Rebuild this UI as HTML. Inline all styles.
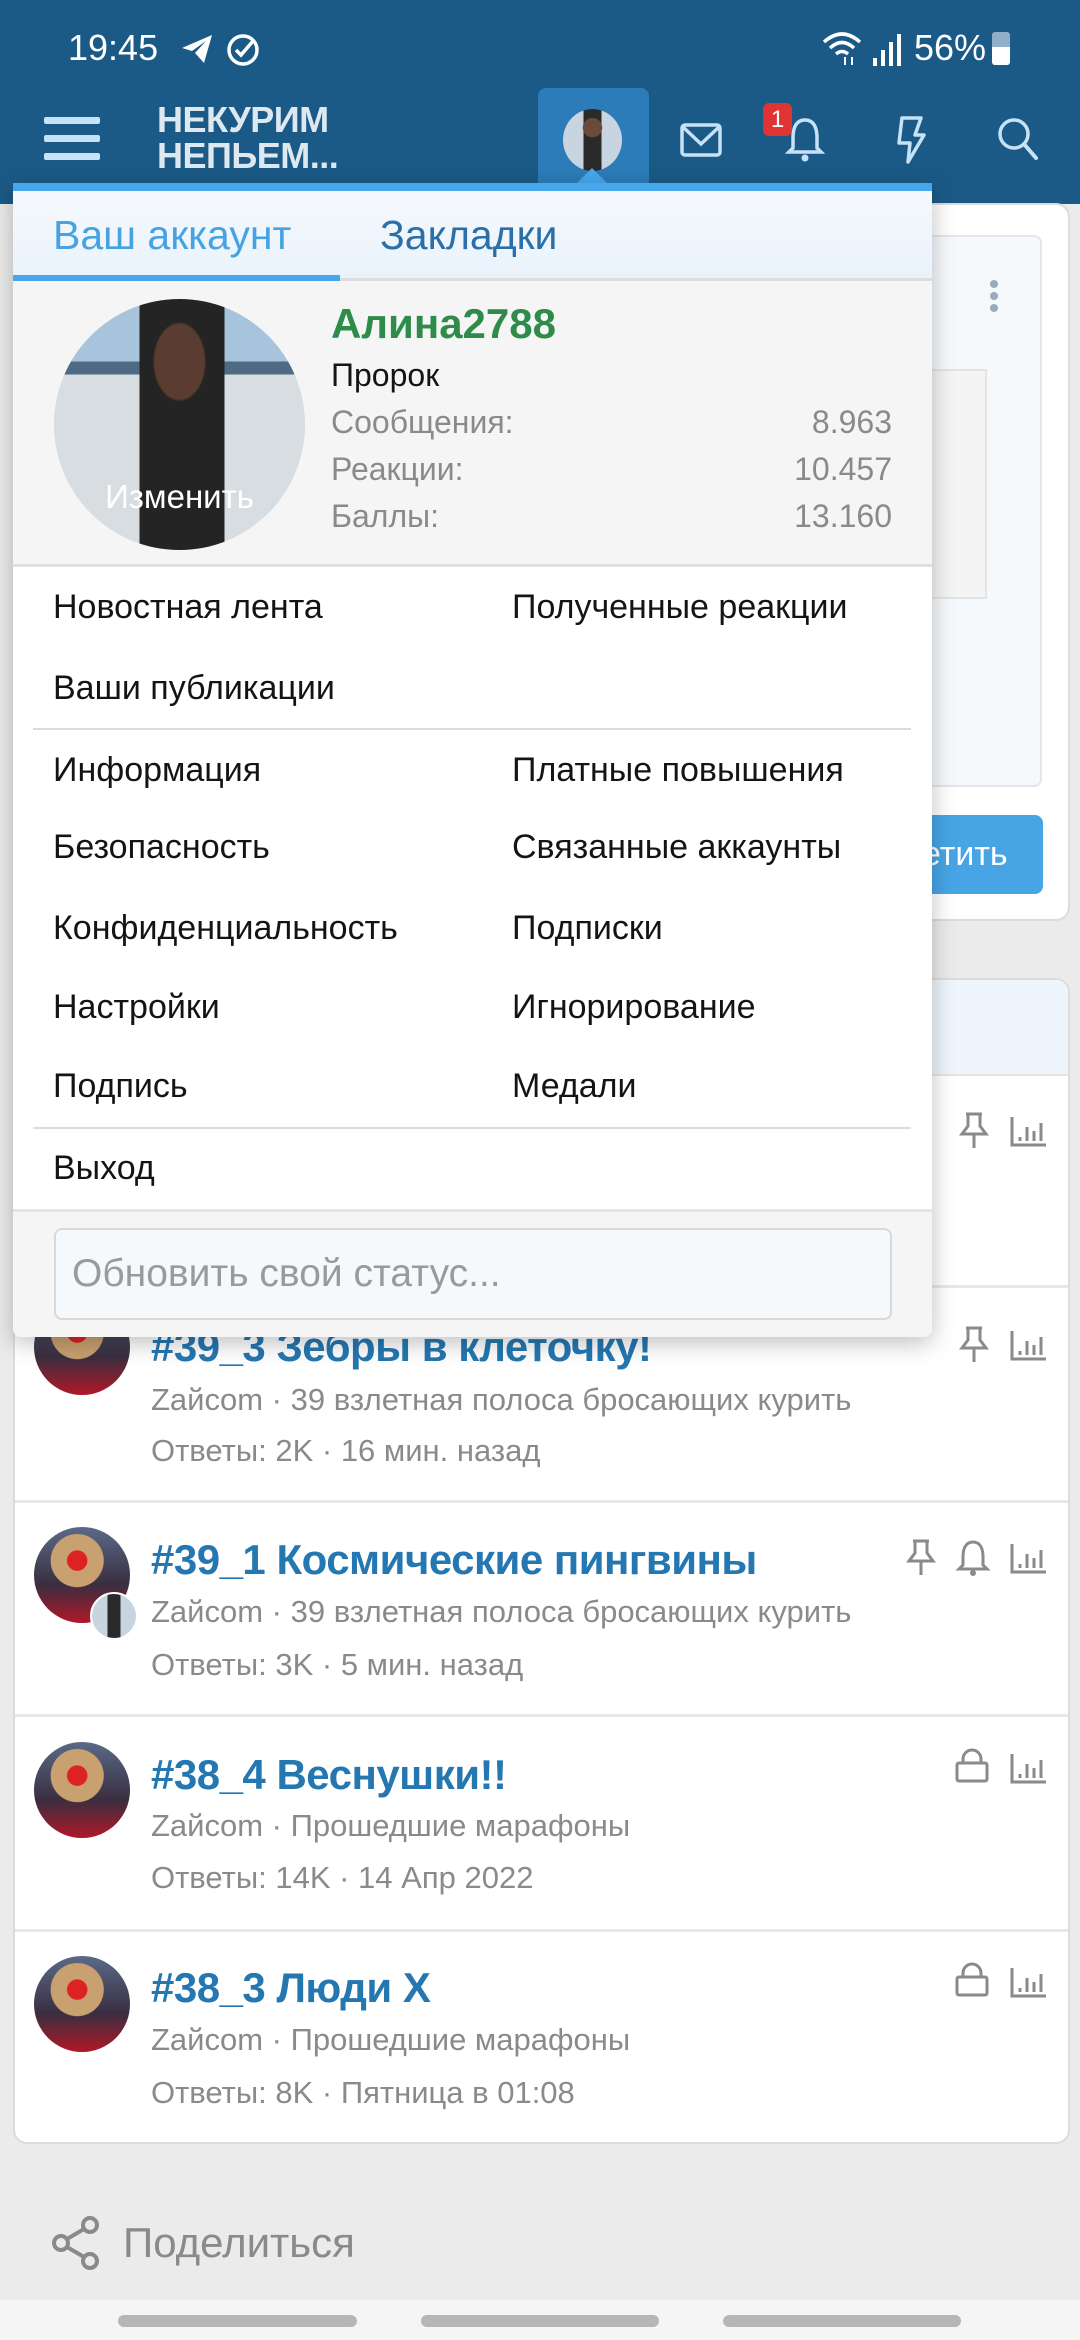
<!DOCTYPE html>
<html><head><meta charset="utf-8"><style>
*{margin:0;padding:0;box-sizing:border-box}
body{width:1080px;height:2340px;position:relative;overflow:hidden;background:#ebebeb;font-family:"Liberation Sans",sans-serif}
.a{position:absolute;white-space:nowrap}
.m{font-size:34px;color:#141414;line-height:40px}
.s{font-size:32px}
.g{color:#8a8a8a}
.t{font-size:42px;font-weight:bold;color:#2577b1;line-height:46px;letter-spacing:-0.5px}
.r{font-size:31px;color:#8a8a8a;line-height:40px}
svg{position:absolute;overflow:visible}
</style></head><body>
<div class="a" style="left:0;top:0;width:1080px;height:204px;background:#1b5a87"></div>
<div class="a" style="left:68px;top:28px;font-size:36px;color:#fff;line-height:40px">19:45</div>
<svg style="left:180px;top:33px" width="34" height="32" viewBox="0 0 34 32"><path d="M2 15 L32 2 L24 30 L15 20 L26 8 L12 18 Z" fill="#fff"/></svg>
<svg style="left:226px;top:33px" width="34" height="34" viewBox="0 0 34 34"><circle cx="17" cy="17" r="14" fill="none" stroke="#fff" stroke-width="3.5"/><path d="M10 17 L15 22 L27 8" fill="none" stroke="#fff" stroke-width="3.5"/></svg>
<svg style="left:822px;top:30px" width="40" height="36" viewBox="0 0 40 36"><path d="M2 12 Q20 -4 38 12 M8 18 Q20 7 32 18 M14 24 Q20 19 26 24" fill="none" stroke="#fff" stroke-width="3.5"/><path d="M23 27 v8 M30 35 v-8" stroke="#fff" stroke-width="2"/></svg>
<svg style="left:872px;top:34px" width="30" height="32" viewBox="0 0 30 32"><rect x="1" y="24" width="4" height="8" fill="#fff"/><rect x="9" y="16" width="4" height="16" fill="#fff"/><rect x="17" y="8" width="4" height="24" fill="#fff"/><rect x="25" y="0" width="4" height="32" fill="#fff"/></svg>
<div class="a" style="left:914px;top:28px;font-size:36px;color:#fff;line-height:40px">56%</div>
<div class="a" style="left:992px;top:32px;width:18px;height:33px;background:#8fb0c8;border-radius:3px"></div>
<div class="a" style="left:992px;top:47px;width:18px;height:18px;background:#fff;border-radius:0 0 3px 3px"></div>
<div class="a" style="left:44px;top:117px;width:56px;height:7px;background:#c5e2f7;border-radius:2px"></div>
<div class="a" style="left:44px;top:135px;width:56px;height:7px;background:#c5e2f7;border-radius:2px"></div>
<div class="a" style="left:44px;top:153px;width:56px;height:7px;background:#c5e2f7;border-radius:2px"></div>
<div class="a" style="left:157px;top:102px;font-size:36px;font-weight:bold;color:#dde8f0;line-height:36px;letter-spacing:-0.5px">НЕКУРИМ<br>НЕПЬЕМ...</div>
<div class="a" style="left:538px;top:88px;width:111px;height:100px;background:#2b7cb8;border-radius:8px 8px 0 0"></div>
<div class="a" style="left:563px;top:109px;width:59px;height:62px;border-radius:50%;background:radial-gradient(circle at 50% 30%,#6a4a3a 0 18%,transparent 19%),linear-gradient(90deg,#c8d4df 0 35%,#2a2a2a 35% 65%,#c8d4df 65%)"></div>
<svg style="left:572px;top:168px" width="40" height="20"><path d="M0 20 L20 0 L40 20Z" fill="#47a7eb"/></svg>
<svg style="left:680px;top:123px" width="42" height="34" viewBox="0 0 42 34"><rect x="2" y="2" width="38" height="30" rx="3" fill="none" stroke="#c5e2f7" stroke-width="3.5"/><path d="M3 4 L21 21 L39 4" fill="none" stroke="#c5e2f7" stroke-width="3.5"/></svg>
<svg style="left:786px;top:116px" width="38" height="46" viewBox="0 0 38 46"><path d="M19 4 C9 4 7 14 7 22 L7 32 L3 36 L35 36 L31 32 L31 22 C31 14 29 4 19 4Z" fill="none" stroke="#c5e2f7" stroke-width="3.5"/><circle cx="19" cy="42" r="3.5" fill="#c5e2f7"/></svg>
<div class="a" style="left:763px;top:103px;width:29px;height:33px;background:#e03434;border-radius:6px;color:#fff;font-size:24px;line-height:33px;text-align:center">1</div>
<svg style="left:893px;top:115px" width="34" height="50" viewBox="0 0 34 50"><path d="M9 3 L28 3 L22 20 L31 20 L15 47 L17 28 L6 28 Z" fill="none" stroke="#c5e2f7" stroke-width="3.5" stroke-linejoin="round"/></svg>
<svg style="left:996px;top:116px" width="44" height="46" viewBox="0 0 44 46"><circle cx="18" cy="18" r="14" fill="none" stroke="#c5e2f7" stroke-width="3.5"/><path d="M28 28 L40 42" stroke="#c5e2f7" stroke-width="4" stroke-linecap="round"/></svg>

<div class="a" style="left:900px;top:203px;width:170px;height:718px;background:#fff;border:2px solid #dcdcdc;border-radius:14px"></div>
<div class="a" style="left:900px;top:235px;width:142px;height:552px;background:#f6f9fc;border:2px solid #e0e6ec;border-radius:8px"></div>
<div class="a" style="left:900px;top:369px;width:87px;height:230px;background:#f4f4f4;border:2px solid #e4e4e4"></div>
<div class="a" style="left:990px;top:280px;width:8px;height:8px;border-radius:50%;background:#9aaab8;box-shadow:0 12px 0 #9aaab8,0 24px 0 #9aaab8"></div>
<div class="a" style="left:900px;top:815px;width:143px;height:79px;background:#47a5e6;border-radius:8px;color:#fff;font-size:34px;line-height:79px;padding-left:22px">етить</div>

<div class="a" style="left:13px;top:978px;width:1057px;height:1166px;background:#fff;border:2px solid #dcdcdc;border-radius:14px;overflow:hidden">
<div style="height:96px;background:#eef5fc;border-bottom:2px solid #e4e4e4"></div>
</div>
<div class="a" style="left:15px;top:1285px;width:1053px;height:3px;background:#e8e8e8"></div>
<div class="a" style="left:15px;top:1500px;width:1053px;height:3px;background:#e8e8e8"></div>
<div class="a" style="left:15px;top:1714px;width:1053px;height:3px;background:#e8e8e8"></div>
<div class="a" style="left:15px;top:1929px;width:1053px;height:3px;background:#e8e8e8"></div>

<div class="a" style="left:34px;top:1299px;width:96px;height:96px;border-radius:50%;background:radial-gradient(circle at 45% 35%,#d22 0 12%,#c9a070 13% 32%,transparent 33%),linear-gradient(180deg,#5a6a88,#3a2e40 60%,#b01828)"></div>
<div class="a t" style="left:151px;top:1324px">#39_3 Зебры в клеточку!</div>
<div class="a r" style="left:151px;top:1380px">Zайcom · 39 взлетная полоса бросающих курить</div>
<div class="a r" style="left:151px;top:1431px">Ответы: 2K · 16 мин. назад</div>

<div class="a" style="left:34px;top:1527px;width:96px;height:96px;border-radius:50%;background:radial-gradient(circle at 45% 35%,#d22 0 12%,#c9a070 13% 32%,transparent 33%),linear-gradient(180deg,#5a6a88,#3a2e40 60%,#b01828)"></div>
<div class="a" style="left:90px;top:1592px;width:48px;height:48px;border-radius:50%;border:2px solid #fff;background:linear-gradient(90deg,#c8d4df 0 35%,#2a2a2a 35% 65%,#c8d4df 65%)"></div>
<div class="a t" style="left:151px;top:1537px">#39_1 Космические пингвины</div>
<div class="a r" style="left:151px;top:1592px">Zайcom · 39 взлетная полоса бросающих курить</div>
<div class="a r" style="left:151px;top:1645px">Ответы: 3K · 5 мин. назад</div>

<div class="a" style="left:34px;top:1742px;width:96px;height:96px;border-radius:50%;background:radial-gradient(circle at 45% 35%,#d22 0 12%,#c9a070 13% 32%,transparent 33%),linear-gradient(180deg,#5a6a88,#3a2e40 60%,#b01828)"></div>
<div class="a t" style="left:151px;top:1752px">#38_4 Веснушки!!</div>
<div class="a r" style="left:151px;top:1806px">Zайcom · Прошедшие марафоны</div>
<div class="a r" style="left:151px;top:1858px">Ответы: 14K · 14 Апр 2022</div>

<div class="a" style="left:34px;top:1956px;width:96px;height:96px;border-radius:50%;background:radial-gradient(circle at 45% 35%,#d22 0 12%,#c9a070 13% 32%,transparent 33%),linear-gradient(180deg,#5a6a88,#3a2e40 60%,#b01828)"></div>
<div class="a t" style="left:151px;top:1965px">#38_3 Люди X</div>
<div class="a r" style="left:151px;top:2020px">Zайcom · Прошедшие марафоны</div>
<div class="a r" style="left:151px;top:2073px">Ответы: 8K · Пятница в 01:08</div>

<svg style="left:958px;top:1326px" width="32" height="38" viewBox="0 0 32 38"><path d="M8 2 H24 M10 2 V14 L4 22 H28 L22 14 V2 M16 22 V36" fill="none" stroke="#8a8a8a" stroke-width="3"/></svg>
<svg style="left:1010px;top:1329px" width="38" height="32" viewBox="0 0 38 32"><path d="M2 2 V30 H36 M10 22 V26 M17 12 V26 M24 16 V26 M31 8 V26" fill="none" stroke="#8a8a8a" stroke-width="3"/></svg>
<svg style="left:958px;top:1112px" width="32" height="38" viewBox="0 0 32 38"><path d="M8 2 H24 M10 2 V14 L4 22 H28 L22 14 V2 M16 22 V36" fill="none" stroke="#8a8a8a" stroke-width="3"/></svg>
<svg style="left:1010px;top:1115px" width="38" height="32" viewBox="0 0 38 32"><path d="M2 2 V30 H36 M10 22 V26 M17 12 V26 M24 16 V26 M31 8 V26" fill="none" stroke="#8a8a8a" stroke-width="3"/></svg>
<svg style="left:905px;top:1539px" width="32" height="38" viewBox="0 0 32 38"><path d="M8 2 H24 M10 2 V14 L4 22 H28 L22 14 V2 M16 22 V36" fill="none" stroke="#8a8a8a" stroke-width="3"/></svg>
<svg style="left:956px;top:1539px" width="34" height="38" viewBox="0 0 34 38"><path d="M17 3 C9 3 7 11 7 18 L7 26 L3 30 H31 L27 26 V18 C27 11 25 3 17 3Z" fill="none" stroke="#8a8a8a" stroke-width="3"/><circle cx="17" cy="34" r="3" fill="#8a8a8a"/></svg>
<svg style="left:1010px;top:1542px" width="38" height="32" viewBox="0 0 38 32"><path d="M2 2 V30 H36 M10 22 V26 M17 12 V26 M24 16 V26 M31 8 V26" fill="none" stroke="#8a8a8a" stroke-width="3"/></svg>
<svg style="left:955px;top:1749px" width="34" height="34" viewBox="0 0 34 34"><path d="M8 14 V10 A9 9 0 0 1 26 10 V14" fill="none" stroke="#8a8a8a" stroke-width="3"/><rect x="2" y="14" width="30" height="18" rx="2" fill="none" stroke="#8a8a8a" stroke-width="3"/></svg>
<svg style="left:1010px;top:1752px" width="38" height="32" viewBox="0 0 38 32"><path d="M2 2 V30 H36 M10 22 V26 M17 12 V26 M24 16 V26 M31 8 V26" fill="none" stroke="#8a8a8a" stroke-width="3"/></svg>
<svg style="left:955px;top:1963px" width="34" height="34" viewBox="0 0 34 34"><path d="M8 14 V10 A9 9 0 0 1 26 10 V14" fill="none" stroke="#8a8a8a" stroke-width="3"/><rect x="2" y="14" width="30" height="18" rx="2" fill="none" stroke="#8a8a8a" stroke-width="3"/></svg>
<svg style="left:1010px;top:1966px" width="38" height="32" viewBox="0 0 38 32"><path d="M2 2 V30 H36 M10 22 V26 M17 12 V26 M24 16 V26 M31 8 V26" fill="none" stroke="#8a8a8a" stroke-width="3"/></svg>

<svg style="left:52px;top:2216px" width="48" height="54" viewBox="0 0 48 54"><circle cx="38" cy="9" r="7" fill="none" stroke="#8a8a8a" stroke-width="4"/><circle cx="9" cy="27" r="7" fill="none" stroke="#8a8a8a" stroke-width="4"/><circle cx="38" cy="45" r="7" fill="none" stroke="#8a8a8a" stroke-width="4"/><path d="M15 23 L32 13 M15 31 L32 41" stroke="#8a8a8a" stroke-width="4"/></svg>
<div class="a" style="left:123px;top:2219px;font-size:42px;color:#8a8a8a;line-height:48px">Поделиться</div>
<div class="a" style="left:0;top:2300px;width:1080px;height:40px;background:#f5f5f5"></div>
<div class="a" style="left:118px;top:2315px;width:239px;height:12px;background:#b6b6b6;border-radius:6px"></div>
<div class="a" style="left:421px;top:2315px;width:238px;height:12px;background:#b6b6b6;border-radius:6px"></div>
<div class="a" style="left:723px;top:2315px;width:238px;height:12px;background:#b6b6b6;border-radius:6px"></div>

<div class="a" style="left:13px;top:183px;width:919px;height:1154px;background:#fff;border-radius:0 0 8px 8px;box-shadow:0 6px 24px rgba(0,0,0,0.25);overflow:hidden">
 <div style="height:8px;background:#47a7eb"></div>
 <div style="height:90px;background:linear-gradient(#f5f9fd,#e9f2fb);border-bottom:3px solid #dcdcdc;position:relative">
  <div class="a" style="left:40px;top:21px;font-size:41px;color:#47a2e2;line-height:46px">Ваш аккаунт</div>
  <div class="a" style="left:367px;top:21px;font-size:41px;color:#2a6fa8;line-height:46px">Закладки</div>
  <div class="a" style="left:0;top:84px;width:327px;height:7px;background:#47a7eb"></div>
 </div>
 <div style="height:286px;background:#f5f5f5;border-bottom:3px solid #e0e0e0;position:relative">
  <div class="a" style="left:41px;top:18px;width:251px;height:251px;border-radius:50%;background:radial-gradient(ellipse at 50% 25%,#5a3c30 0 14%,transparent 15%),linear-gradient(90deg,transparent 0 34%,#242424 34% 68%,transparent 68%),linear-gradient(180deg,#a8c4dc 0 25%,#4e6a84 25% 30%,#d8dde2 30% 100%)"></div>
  <div class="a" style="left:41px;top:196px;width:251px;text-align:center;font-size:33px;color:#fff;line-height:40px">Изменить</div>
  <div class="a" style="left:318px;top:19px;font-size:42px;font-weight:bold;color:#2e8b4a;line-height:48px">Алина2788</div>
  <div class="a m s" style="left:318px;top:74px">Пророк</div>
  <div class="a m s g" style="left:318px;top:121px">Сообщения:</div>
  <div class="a m s g" style="left:318px;top:168px">Реакции:</div>
  <div class="a m s g" style="left:318px;top:215px">Баллы:</div>
  <div class="a m s g" style="right:40px;top:121px">8.963</div>
  <div class="a m s g" style="right:40px;top:168px">10.457</div>
  <div class="a m s g" style="right:40px;top:215px">13.160</div>
 </div>
</div>
<div class="a m" style="left:53px;top:587px">Новостная лента</div>
<div class="a m" style="left:512px;top:587px">Полученные реакции</div>
<div class="a m" style="left:53px;top:668px">Ваши публикации</div>
<div class="a" style="left:33px;top:728px;width:878px;height:2px;background:#dcdcdc"></div>
<div class="a m" style="left:53px;top:750px">Информация</div>
<div class="a m" style="left:512px;top:750px">Платные повышения</div>
<div class="a m" style="left:53px;top:827px">Безопасность</div>
<div class="a m" style="left:512px;top:827px">Связанные аккаунты</div>
<div class="a m" style="left:53px;top:908px">Конфиденциальность</div>
<div class="a m" style="left:512px;top:908px">Подписки</div>
<div class="a m" style="left:53px;top:987px">Настройки</div>
<div class="a m" style="left:512px;top:987px">Игнорирование</div>
<div class="a m" style="left:53px;top:1066px">Подпись</div>
<div class="a m" style="left:512px;top:1066px">Медали</div>
<div class="a" style="left:33px;top:1127px;width:878px;height:2px;background:#dcdcdc"></div>
<div class="a m" style="left:53px;top:1148px">Выход</div>
<div class="a" style="left:13px;top:1209px;width:919px;height:128px;background:#f5f5f5;border-top:3px solid #e4e4e4;border-radius:0 0 8px 8px"></div>
<div class="a" style="left:54px;top:1228px;width:838px;height:92px;background:#f6f9fc;border:2px solid #d8d8d8;border-radius:8px"></div>
<div class="a" style="left:72px;top:1252px;font-size:39px;color:#9a9a9a;line-height:44px">Обновить свой статус...</div>
</body></html>
